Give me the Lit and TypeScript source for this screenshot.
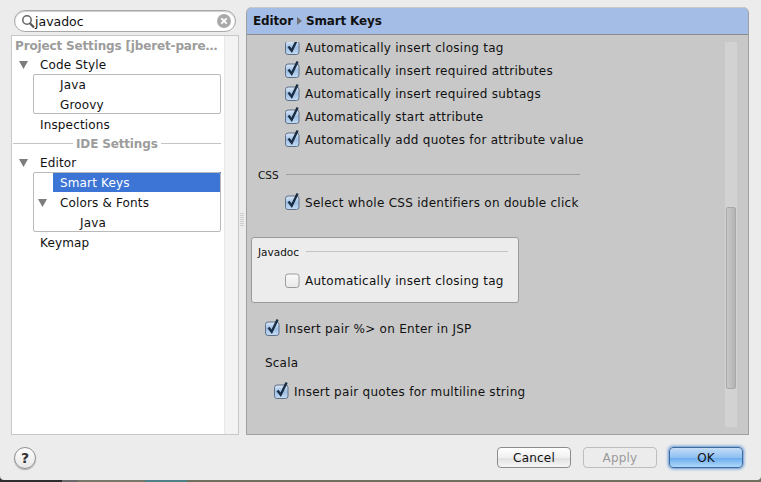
import { LitElement, html, css, svg } from "lit";
import { customElement, property } from "lit/decorators.js";

const triangle = svg`<svg class="tri" width="9" height="8" viewBox="0 0 9 8"><path d="M0 0H9L4.5 8Z" fill="#7d7d7d"/></svg>`;

@customElement("mac-check")
export class MacCheck extends LitElement {
  @property({ type: Boolean }) checked = false;
  @property() label = "";

  static styles = css`
    :host {
      display: flex;
      align-items: center;
      height: 23px;
      gap: 5px;
      font: 12px "DejaVu Sans", sans-serif;
      letter-spacing: 0.27px;
      color: #111;
      white-space: nowrap;
    }
    .box {
      width: 15px;
      height: 15px;
      flex: none;
      display: block;
      overflow: visible;
    }
  `;

  render() {
    return html`
      <svg class="box" viewBox="0 0 15 15">
        <defs>
          <linearGradient id="on" x1="0" y1="0" x2="0" y2="1">
            <stop offset="0" stop-color="#dfe9f6" />
            <stop offset="0.5" stop-color="#9dbfe4" />
            <stop offset="1" stop-color="#c6dcf3" />
          </linearGradient>
          <linearGradient id="off" x1="0" y1="0" x2="0" y2="1">
            <stop offset="0" stop-color="#fafafa" />
            <stop offset="1" stop-color="#e8e8e8" />
          </linearGradient>
        </defs>
        <rect
          x="0.5"
          y="1"
          width="13.5"
          height="13.5"
          rx="2.5"
          fill=${this.checked ? "url(#on)" : "url(#off)"}
          stroke=${this.checked ? "#5f7088" : "#9c9c9c"}
        />
        ${this.checked
          ? svg`<path d="M3.5 6.5L6.7 10.8L12.6 -1.5" fill="none" stroke="#1a2e46" stroke-width="2.4"/>`
          : ""}
      </svg>
      <span>${this.label}</span>
    `;
  }
}

@customElement("app-root")
export class AppRoot extends LitElement {
  static styles = css`
    :host {
      display: block;
      width: 761px;
      height: 482px;
      overflow: hidden;
      background: linear-gradient(
        90deg,
        #2e2e2e 0 62px,
        #6a6a6a 62px 78px,
        #77776a 78px 145px,
        #4d7f86 145px 187px,
        #70705f 187px
      );
      font: 12px "DejaVu Sans", sans-serif;
      color: #111;
    }
    .window {
      height: 480px;
      display: flex;
      flex-direction: column;
      padding: 7px 12px 0 11px;
      box-sizing: border-box;
      background: #ececec;
      border-radius: 0 0 4px 4px;
    }
    .main {
      display: flex;
      gap: 7px;
      height: 428px;
    }
    .left {
      width: 228px;
      flex: none;
      display: flex;
      flex-direction: column;
      position: relative;
    }
    .search {
      height: 22px;
      margin: 3px;
      box-sizing: border-box;
      border: 1px solid #a8a8a8;
      border-radius: 11px;
      background: #fff;
      box-shadow: inset 0 1px 1px #ccc;
      display: flex;
      align-items: center;
      padding: 0 4px 0 6px;
      gap: 0;
      font-size: 12.5px;
    }
    .search span {
      flex: 1;
    }
    .tree {
      flex: 1;
      border: 1px solid #c8c8c8;
      background: #fff;
      display: flex;
    }
    .items {
      flex: 1;
      min-width: 0;
      letter-spacing: 0.15px;
    }
    .tree-scroll {
      width: 13px;
      background: #f3f3f3;
      border-left: 1px solid #e8e8e8;
    }
    .heading {
      font-weight: bold;
      color: #9c9c9c;
      height: 18px;
      line-height: 20px;
      padding-left: 3px;
      white-space: nowrap;
      letter-spacing: -0.15px;
    }
    .row {
      height: 20px;
      box-sizing: border-box;
      padding-top: 1px;
      display: flex;
      align-items: center;
      white-space: nowrap;
    }
    .tri {
      flex: none;
    }
    .l0 {
      padding-left: 7px;
      gap: 12px;
    }
    .l0.plain {
      padding-left: 28px;
    }
    .group {
      margin: 0 3px 0 21px;
      outline: 1px solid #b9b9b9;
      outline-offset: -1px;
      border-radius: 2px;
    }
    .l1 {
      padding-left: 27px;
    }
    .l2 {
      padding-left: 47px;
    }
    .l1.open {
      padding-left: 5px;
      gap: 13px;
    }
    .selected {
      margin-left: 20px;
      padding-left: 7px;
      background: #3d75d6;
      color: #fff;
    }
    .divider {
      display: flex;
      align-items: center;
      gap: 3px;
      height: 18px;
      box-sizing: border-box;
      padding: 1px 3px 0 1px;
      font-weight: bold;
      color: #9c9c9c;
      letter-spacing: -0.15px;
    }
    .divider i {
      flex: 1;
      height: 1px;
      background: #c4c4c4;
    }
    .divider i:first-child {
      flex: none;
      width: 60px;
    }
    .sash {
      position: absolute;
      right: -5px;
      top: 206px;
      width: 4px;
      height: 14px;
      background: repeating-linear-gradient(#cfcfcf 0 1px, transparent 1px 2px);
    }
    .right {
      flex: 1;
      display: flex;
      flex-direction: column;
      border: 1px solid #a0a0a0;
      border-top: none;
      border-radius: 6px 6px 0 0;
      background: #c8c8c8;
      overflow: hidden;
    }
    .title {
      height: 28px;
      flex: none;
      box-sizing: border-box;
      margin: 0 -1px;
      background: #a4bde6;
      border-top: 1px solid #c9c9c9;
      border-bottom: 1px solid #8b8b8b;
      border-radius: 6px 6px 0 0;
      display: flex;
      align-items: center;
      padding-left: 7px;
      gap: 4px;
      font-weight: bold;
      letter-spacing: -0.15px;
      color: #111;
    }
    .body {
      flex: 1;
      display: flex;
      min-height: 0;
    }
    .scroller {
      flex: 1;
      min-width: 0;
      margin-top: 7px;
      overflow: hidden;
    }
    .pane {
      margin-top: -6px;
      padding-left: 38px;
    }
    .sep {
      display: flex;
      align-items: center;
      gap: 7px;
      margin: 18px 0 11px -27px;
      height: 11px;
      width: 322px;
      font-size: 10.5px;
    }
    .sep i {
      flex: 1;
      height: 1px;
      background: #a0a0a0;
    }
    .boxed {
      margin: 23px 0 0 -34px;
      width: 268px;
      height: 66px;
      box-sizing: border-box;
      border: 1px solid #9a9a9a;
      border-radius: 3px;
      background: #ececec;
      padding: 8px 6px 0 6px;
    }
    .boxed .sep {
      margin: 0 0 12px 0;
      width: 250px;
    }
    .boxed .sep i {
      background: #c4c4c4;
    }
    .boxed mac-check {
      margin-left: 27px;
    }
    .jsp {
      margin: 14px 0 0 -20px;
    }
    .scala {
      margin: 15px 0 0 -20px;
      height: 16px;
      line-height: 16px;
      letter-spacing: 0.2px;
    }
    .scala-check {
      margin: 9px 0 0 -11px;
    }
    .track {
      width: 12px;
      flex: none;
      margin: 7px 11px 7px 0;
      background: #d2d2d2;
      display: flex;
      flex-direction: column;
    }
    .thumb {
      margin: 165px 1px 38px;
      flex: 1;
      box-sizing: border-box;
      border: 1px solid #a8a8a8;
      border-radius: 2px;
      background: linear-gradient(90deg, #c8c8c8, #b4b4b4);
    }
    .footer {
      flex: 1;
      display: flex;
      align-items: center;
      padding: 0 6px 0 3px;
      gap: 12px;
    }
    .help {
      width: 20px;
      height: 20px;
      border: 1px solid #8f8f8f;
      border-radius: 50%;
      background: linear-gradient(#fff, #e6e6e6);
      box-shadow: 0 1px 1px #aaa;
      display: flex;
      align-items: center;
      justify-content: center;
      font-weight: bold;
      font-size: 14px;
      color: #333;
      margin-right: auto;
    }
    .btn {
      width: 74px;
      height: 21px;
      box-sizing: border-box;
      border: 1px solid #8c8c8c;
      border-radius: 4px;
      background: linear-gradient(#fff, #f0f0f0 50%, #e2e2e2 55%, #f6f6f6);
      display: flex;
      align-items: center;
      justify-content: center;
      font-size: 12px;
      letter-spacing: 0.2px;
    }
    .btn.off {
      border-color: #bdbdbd;
      color: #9a9a9a;
      background: #ececec;
    }
    .btn.ok {
      border-color: #3f6a9e;
      background: linear-gradient(#c4dcf6, #8fc0f2 50%, #6eaeef 55%, #aed8fb);
      box-shadow: 0 0 3px 1px #5f95d6;
    }
  `;

  render() {
    return html`
      <div class="window">
        <div class="main">
          <div class="left">
            <div class="search">
              <svg width="14" height="15" viewBox="0 0 14 15">
                <circle cx="6" cy="6" r="4.2" fill="none" stroke="#666" stroke-width="1.5" />
                <path d="M9 9.2L13 13.5" stroke="#555" stroke-width="2.2" />
              </svg>
              <span>javadoc</span>
              <svg width="14" height="14" viewBox="0 0 14 14">
                <circle cx="7" cy="7" r="7" fill="#aaa" />
                <path d="M4.3 4.3L9.7 9.7M9.7 4.3L4.3 9.7" stroke="#fff" stroke-width="1.8" />
              </svg>
            </div>
            <div class="tree">
              <div class="items">
                <div class="heading">Project Settings [jberet-pare…</div>
                <div class="row l0">${triangle}<span>Code Style</span></div>
                <div class="group">
                  <div class="row l1">Java</div>
                  <div class="row l1">Groovy</div>
                </div>
                <div class="row l0 plain">Inspections</div>
                <div class="divider"><i></i><span>IDE Settings</span><i></i></div>
                <div class="row l0">${triangle}<span>Editor</span></div>
                <div class="group">
                  <div class="row selected">Smart Keys</div>
                  <div class="row l1 open">${triangle}<span>Colors &amp; Fonts</span></div>
                  <div class="row l2">Java</div>
                </div>
                <div class="row l0 plain">Keymap</div>
              </div>
              <div class="tree-scroll"></div>
            </div>
            <div class="sash"></div>
          </div>
          <div class="right">
            <div class="title">
              <span>Editor</span>
              <svg width="5" height="8" viewBox="0 0 5 8"><path d="M0 0L5 4L0 8Z" fill="#707070" /></svg>
              <span>Smart Keys</span>
            </div>
            <div class="body">
              <div class="scroller">
                <div class="pane">
                  <mac-check checked label="Automatically insert closing tag"></mac-check>
                  <mac-check checked label="Automatically insert required attributes"></mac-check>
                  <mac-check checked label="Automatically insert required subtags"></mac-check>
                  <mac-check checked label="Automatically start attribute"></mac-check>
                  <mac-check checked label="Automatically add quotes for attribute value"></mac-check>
                  <div class="sep"><span>CSS</span><i></i></div>
                  <mac-check checked label="Select whole CSS identifiers on double click"></mac-check>
                  <div class="boxed">
                    <div class="sep"><span>Javadoc</span><i></i></div>
                    <mac-check label="Automatically insert closing tag"></mac-check>
                  </div>
                  <mac-check class="jsp" checked label="Insert pair %> on Enter in JSP"></mac-check>
                  <div class="scala">Scala</div>
                  <mac-check class="scala-check" checked label="Insert pair quotes for multiline string"></mac-check>
                </div>
              </div>
              <div class="track"><div class="thumb"></div></div>
            </div>
          </div>
        </div>
        <div class="footer">
          <div class="help">?</div>
          <div class="btn">Cancel</div>
          <div class="btn off">Apply</div>
          <div class="btn ok">OK</div>
        </div>
      </div>
    `;
  }
}
